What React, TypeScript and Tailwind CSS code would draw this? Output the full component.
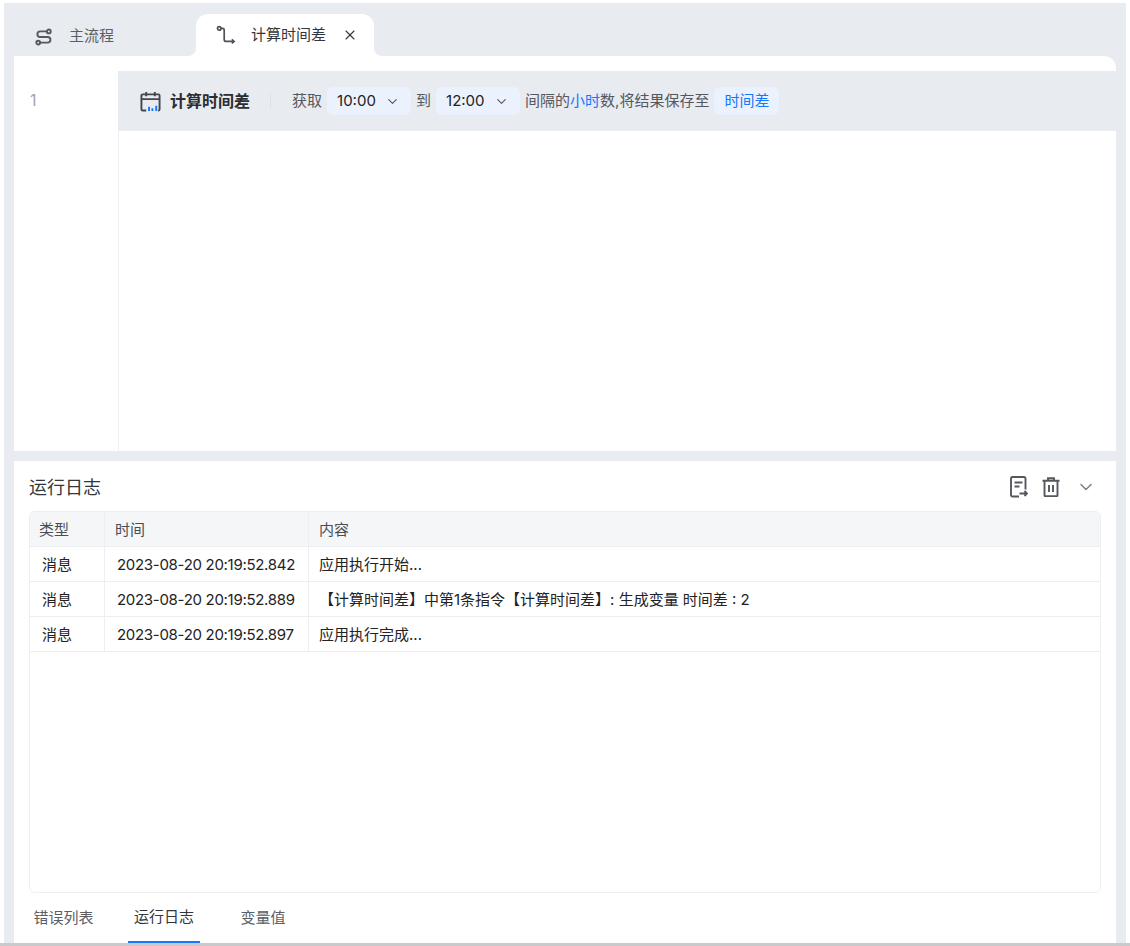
import { ChevronDown, X } from "lucide-react"

const font = "font-['Inter','Noto_Sans_CJK_SC',sans-serif]"

const rows = [
  { time: "2023-08-20 20:19:52.842", text: "应用执行开始..." },
  { time: "2023-08-20 20:19:52.889", text: "【计算时间差】中第1条指令【计算时间差】: 生成变量 时间差 : 2" },
  { time: "2023-08-20 20:19:52.897", text: "应用执行完成..." },
]

const FlowIcon = () => (
  <svg width="18" height="18" viewBox="0 0 18 18" fill="none" stroke="#55585e" strokeWidth="1.9">
    <circle cx="13.8" cy="3.4" r="1.9" />
    <circle cx="3.2" cy="14.6" r="1.9" />
    <path d="M11.8 3.4H5.2a2.800 2.800 0 0 0 0 5.600h7.400a2.800 2.800 0 0 1 0 5.600H5.100" />
  </svg>
)

const StepIcon = () => (
  <svg width="20" height="20" viewBox="0 0 20 20" fill="none" stroke="#4e5259" strokeWidth="1.7">
    <circle cx="3.2" cy="3.4" r="1.7" />
    <path d="M4.900 3.400h1.700a1.600 1.600 0 0 1 1.600 1.600v9.400a2 2 0 0 0 2 2h7.400" />
    <path d="M15.800 14.400l2.300 2-2.300 2" />
  </svg>
)

const CalendarIcon = () => (
  <svg width="21" height="21" viewBox="0 0 22 22" fill="none">
    <path d="M6.500 20.500H2.800a1.300 1.300 0 0 1-1.300-1.300V4.800a1.300 1.300 0 0 1 1.300-1.300h16.400a1.300 1.300 0 0 1 1.300 1.300v14.400a1.300 1.300 0 0 1-1.300 1.300H19" stroke="#44474d" strokeWidth="2" />
    <path d="M1.500 8.500h19M6.500 1v4.500M15.500 1v4.500" stroke="#44474d" strokeWidth="2" />
    <path d="M9.500 16.500v4.500M13 18v3M17 15.500v5.500" stroke="#1677ff" strokeWidth="2" />
  </svg>
)

const ExportIcon = () => (
  <svg width="18" height="22" viewBox="0 0 18 22" fill="none" stroke="#55585e" strokeWidth="1.900">
    <path d="M9 20.500H2.500a1.500 1.500 0 0 1-1.500-1.500V2.500A1.500 1.500 0 0 1 2.500 1h11.500a1.500 1.500 0 0 1 1.500 1.500v11" />
    <path d="M4.500 6.500h8M4.500 10.500h5" />
    <path d="M9.500 17.500h7.500M14.500 15l2.500 2.500-2.500 2.500" />
  </svg>
)

const TrashIcon = () => (
  <svg width="18" height="20" viewBox="0 0 18 20" fill="none" stroke="#55585e" strokeWidth="1.900">
    <path d="M.5 3.800h17M6 3.500V1.200h6v2.300" />
    <path d="M2.500 3.800v14.400a1 1 0 0 0 1 1h11a1 1 0 0 0 1-1V3.800" />
    <path d="M7 8v7M11 8v7" />
  </svg>
)

const TimeSelect = ({ value }: { value: string }) => (
  <div className="flex h-7 w-[84px] items-center justify-between rounded-md bg-[#ebf2fd] pl-[10px] pr-[11px] text-[15px] text-[#222]">
    <span>{value}</span>
    <ChevronDown size={15} strokeWidth={1.8} className="text-[#55585e]" />
  </div>
)

const App = () => {
  return (
    <div className={`h-[946px] w-[1130px] overflow-hidden bg-white pt-[3px] ${font}`}>
      <div className="mx-1 flex h-[940px] w-[1122px] flex-col bg-[#e8ebf0] px-2.5">
        {/* Tabs */}
        <div className="flex h-[53px] shrink-0 items-end">
          <div className="flex h-[42px] w-[182px] items-center gap-[16px] pt-[3px] pl-[21px] text-[15px] text-[#5a5e66]">
            <FlowIcon />
            <span>主流程</span>
          </div>
          <div className="relative flex h-[42px] w-[178px] items-center rounded-t-xl bg-white pl-[20px] text-[15px] text-[#33363b]">
            <StepIcon />
            <span className="ml-[15px]">计算时间差</span>
            <X size={16} strokeWidth={1.6} className="ml-[16px] text-[#33363b]" />
            <div className="absolute -left-2 bottom-0 size-2 bg-white">
              <div className="size-2 rounded-br-lg bg-[#e8ebf0]" />
            </div>
            <div className="absolute -right-2 bottom-0 size-2 bg-white">
              <div className="size-2 rounded-bl-lg bg-[#e8ebf0]" />
            </div>
          </div>
        </div>

        {/* Editor */}
        <div className="flex h-[395px] shrink-0 rounded-tr-xl bg-white pt-[15px]">
          <div className="w-[104px] shrink-0 pl-[16px] pt-[19px] text-base leading-5 text-[#a3a6ab]">1</div>
          <div className="flex min-w-0 flex-1 flex-col">
            <div className="flex h-[60px] shrink-0 items-center bg-[#e8ebf0] pl-[22px] text-[15px] text-[#55585e]">
              <CalendarIcon />
              <span className="ml-[9px] text-base font-bold text-[#2b2d31]">计算时间差</span>
              <div className="ml-[20px] mr-[21px] h-3.5 w-px bg-[#dcdfe5]" />
              <span>获取</span>
              <div className="ml-[5px] mr-[5px]"><TimeSelect value="10:00" /></div>
              <span>到</span>
              <div className="mx-[5px]"><TimeSelect value="12:00" /></div>
              <span>间隔的<span className="text-[#1677ff]">小时</span>数,将结果保存至</span>
              <div className="ml-[5px] flex h-7 w-[65px] items-center justify-center rounded-md bg-[#ebf2fd] text-[#1677ff]">时间差</div>
            </div>
            <div className="flex-1 border-l border-[#edeff2]" />
          </div>
        </div>

        {/* Run log */}
        <div className="mt-2.5 flex min-h-0 flex-1 flex-col bg-white px-[15px]">
          <div className="flex h-[50px] shrink-0 items-center justify-between pt-[2px]">
            <span className="pt-[2px] text-lg text-[#33363b]">运行日志</span>
            <div className="mr-[5px] flex items-center">
              <ExportIcon />
              <div className="ml-[14px]"><TrashIcon /></div>
              <ChevronDown size={20} strokeWidth={1.8} className="ml-[16px] text-[#7d8087]" />
            </div>
          </div>

          <div className="h-[382px] w-[1072px] shrink-0 overflow-hidden rounded-md border border-[#eceef1] text-[15px]">
            <div className="flex h-[35px] border-b border-[#eceef1] bg-[#f5f6f8] text-[#4a4d52]">
              <div className="flex w-[75px] items-center border-r border-[#eceef1] pl-[9px] pt-[2px]">类型</div>
              <div className="flex w-[204px] items-center border-r border-[#eceef1] pl-[10px] pt-[2px]">时间</div>
              <div className="flex flex-1 items-center pl-[10px] pt-[2px]">内容</div>
            </div>
            {rows.map((row) => (
              <div key={row.time} className="flex h-[35px] border-b border-[#eceef1] text-[#222]">
                <div className="flex w-[75px] items-center border-r border-[#eceef1] pl-[12px] pt-[2px]">消息</div>
                <div className="flex w-[204px] items-center border-r border-[#eceef1] pl-[12px] pt-[2px] tracking-[-0.3px]">{row.time}</div>
                <div className="flex flex-1 items-center pl-[10px] pt-[2px]">{row.text}</div>
              </div>
            ))}
          </div>

          <div className="flex h-[50px] shrink-0 items-end text-[15px] text-[#5a5e66]">
            <div className="flex h-[50px] w-[75px] items-center justify-center pr-[6px]">错误列表</div>
            <div className="ml-[24px] flex h-[50px] w-[72px] items-center justify-center border-b-2 border-[#1677ff] text-[#33363b]">运行日志</div>
            <div className="ml-[18px] flex h-[50px] w-[76px] items-center justify-center pl-[14px]">变量值</div>
          </div>
        </div>
      </div>
      <div className="h-[3px] w-full bg-[#c9cacc]" />
    </div>
  )
}

export default App
